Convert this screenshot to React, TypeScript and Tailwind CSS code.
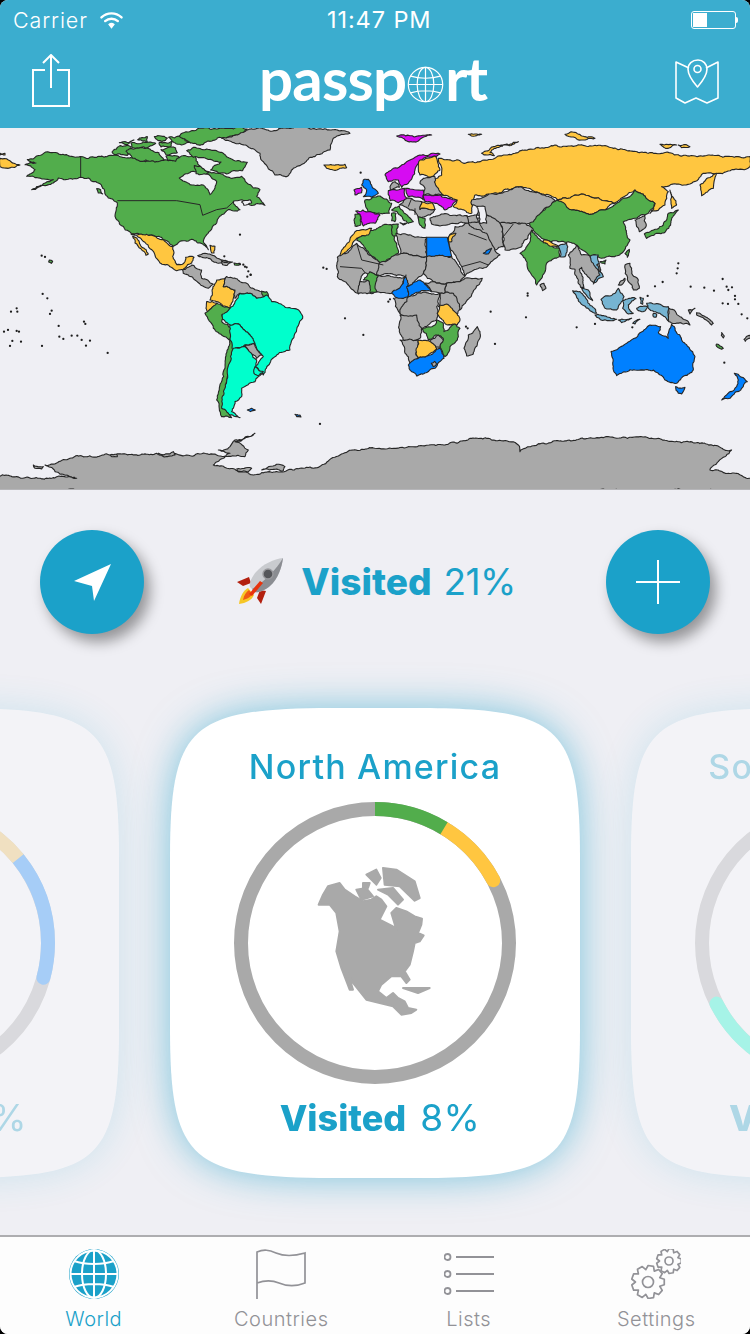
import type { ReactNode } from "react";

const GREEN = "#52ad4c";
const YELLOW = "#ffc640";
const MAGENTA = "#d60cf2";
const BLUE = "#0080ff";
const TEAL = "#00ffcc";
const GRAY = "#a9a9a9";
const SKY = "#76b4d2";
const BG = "#efeff4";

type Land = [string, string, boolean?];
type Region = { x: number; y: number; land: Land[]; borders?: string[]; dots?: string };

// every region is traced at 3x, x/y is the page px of its origin
const americasAndPoles: Region = {
  x: 0,
  y: 125,
  land: [
    [GRAY, "665,40 740,15 860,10 990,15 1050,25 1000,40 990,75 940,95 880,130 860,155 825,150 790,110 780,85 720,55"],
    [YELLOW, "972,120 1035,118 1040,128 1000,135 980,130"],
    [YELLOW, "0,100 25,105 60,120 25,130 0,125"],
    [YELLOW, "0,85 15,85 15,90 0,90"],
    [GRAY, "548,435 575,420 605,435 605,460 640,478 625,490 585,465 550,445"],
    [YELLOW, "650,465 680,455 670,485 705,495 700,520 690,550 650,530 630,525"],
    [YELLOW, "620,530 650,535 625,562 618,550"],
    [GRAY, "680,455 740,475 770,495 790,500 800,515 770,520 750,505 720,505 705,520 705,495 670,485"],
    [GREEN, "785,498 800,500 805,515 790,515"],
    [TEAL, "720,505 750,505 770,520 800,510 815,530 900,560 908,580 885,625 870,675 830,690 790,750 765,725 790,695 770,670 750,630 720,600 690,600 665,580 665,565 705,530"],
    [GREEN, "615,565 650,535 690,550 665,570 665,590 695,610 690,645 665,630 640,610"],
    [TEAL, "690,600 720,600 750,630 765,655 735,660 705,670 690,680 690,645"],
    [GRAY, "735,660 760,655 785,690 770,700 745,680"],
    [GREEN, "690,645 698,680 680,770 668,850 695,878 665,875 650,825 675,730"],
    [TEAL, "700,670 735,665 770,705 765,745 790,745 765,770 725,790 725,815 705,830 695,860 720,878 690,870 665,850 680,770"],
    [TEAL, "765,725 790,740 775,752 762,745"],
    [BLUE, "742,855 755,850 766,855 752,860"],
    [BLUE, "885,868 900,870 903,876 890,875"],
    // antarctica runs across the whole map
    [GRAY, "-6,1055 50,1055 100,1060 230,1060 165,1040 135,1020 210,1000 330,990 470,985 560,990 650,990 735,995 745,975 705,950 765,925 705,945 690,965 655,975 690,985 640,1020 760,1050 900,1030 940,1030 1020,990 1060,975 1125,970 1225,965 1335,960 1465,940 1555,960 1560,980 1625,955 1765,940 1975,940 2195,975 2155,1010 2130,1035 2256,1060 2256,1100 -6,1100"],
    [GRAY, "100,1020 130,1025 125,1032 105,1030"],
    [GRAY, "785,1035 830,1018 855,1025 850,1038"],
    [GRAY, "710,1032 755,1030 745,1040 715,1040"],
    [GRAY, "330,990 350,988 352,995 335,995"],
    [GRAY, "475,985 520,980 525,990 490,995"],
  ],
  dots: "128,507 142,520 33,560 50,550 52,560 155,557 150,567 176,603 252,590 256,597 12,620 24,615 50,618 57,620 37,648 63,650 30,663 126,663 178,635 190,642 215,632 232,632 245,645 270,647 258,662 323,684 960,897 970,428 980,432 752,450 742,455 735,425 720,418",
};

const northAmerica: Region = {
  x: 20,
  y: 128,
  land: [
    [GREEN, "22,95 50,84 95,74 140,80 182,86 230,88 290,82 320,90 385,98 410,95 445,98 470,92 500,85 525,85 535,110 575,135 640,150 665,145 700,180 720,185 710,205 735,232 700,232 665,215 640,220 660,245 625,245 605,260 590,285 560,320 550,340 565,365 550,350 520,335 480,340 460,355 430,335 400,322 335,318 300,290 285,265 292,225 265,210 235,165 205,150 182,148 115,150 100,165 35,185 75,165 100,155 55,150 20,145 45,125 15,110 48,105"],
    [BG, "478,150 520,130 555,135 575,150 590,160 585,180 570,200 555,175 510,170"],
    [BG, "665,222 690,215 695,225 672,232"],
    [GREEN, "500,68 520,58 560,63 600,73 652,98 682,103 668,128 640,128 620,138 572,126 590,110 603,102 560,92 520,88"],
    [GREEN, "276,72 300,53 332,56 347,70 322,82 285,80"],
    [GREEN, "298,44 342,36 322,50"],
    [GREEN, "333,45 407,46 382,60 335,57"],
    [GREEN, "318,70 380,60 417,74 432,97 360,100 338,90"],
    [GREEN, "403,26 442,30 427,40"],
    [GREEN, "353,35 382,26 382,42"],
    [GREEN, "418,43 457,40 452,57 423,57"],
    [GREEN, "423,65 467,60 472,74 438,80"],
    [GREEN, "438,85 477,86 467,100 443,97"],
    [GREEN, "446,28 482,26 512,44 468,47"],
    [GREEN, "488,15 570,3 682,3 642,22 592,30 540,52 508,42 478,25"],
    [GREEN, "523,113 552,123 567,134 528,137"],
    [GREEN, "230,182 242,185 248,198 235,195"],
    [YELLOW, "333,318 395,322 430,335 458,356 458,385 470,410 492,405 497,388 522,388 515,405 495,420 470,428 420,405 400,370 365,335 350,322"],
    [YELLOW, "338,325 350,330 385,378 378,382 345,345"],
    [GRAY, "533,383 555,376 590,390 625,402 600,405 570,392"],
    [GRAY, "605,398 638,402 622,412 608,410"],
    [YELLOW, "570,352 585,355 582,375 575,375"],
    [GREEN, "88,396 98,400 94,406 86,402"],
    [GREEN, "642,405 660,406 656,412 644,411"],
  ],
  borders: ["182,86 182,148", "292,218 470,218 540,230 548,262 590,245 620,240 640,222"],
  dots: "65,383 75,387 660,320 613,385 670,410 680,418 685,430 692,440",
};

const asiaNorth: Region = {
  x: 375,
  y: 125,
  land: [
    [YELLOW, "190,100 250,105 270,115 330,105 420,85 450,75 540,60 700,65 820,85 1000,90 1125,95 1125,125 1030,145 985,145 950,175 860,185 880,200 870,240 825,265 840,235 780,195 720,235 620,207 550,225 510,210 430,185 370,205 300,210 290,265 235,245 245,225 200,210 175,160 200,150"],
    [YELLOW, "1025,145 975,180 980,212 1015,190"],
    [YELLOW, "550,225 620,207 720,235 690,255 650,268 590,255"],
    [MAGENTA, "65,33 170,30 130,48 100,50"],
    [YELLOW, "320,85 355,65 430,50 375,65 345,82 358,92 335,90"],
    [YELLOW, "570,28 600,22 660,40 620,45"],
    [YELLOW, "280,28 320,28 300,33"],
    [YELLOW, "855,58 905,60 880,70"],
    [YELLOW, "910,60 945,65 920,68"],
    [YELLOW, "885,195 905,240 890,250"],
    [GREEN, "460,285 545,225 590,255 650,268 690,255 725,235 780,195 840,235 820,265 785,280 745,290 765,345 740,385 680,400 650,395 610,365 580,350 500,340 470,310"],
  ],
  dots: "",
};

const europeAfrica: Region = {
  x: 340,
  y: 150,
  land: [
    [GRAY, "395,150 480,130 540,110 610,135 645,152 580,215 555,222 480,222 440,195 410,195 430,170 395,165"],
    [GRAY, "480,220 555,220 580,240 545,290 495,300 490,260"],
    [GRAY, "385,218 440,195 480,220 490,290 465,300 440,270 400,255"],
    [GRAY, "380,197 410,195 415,215 385,218"],
    [BG, "410,170 435,170 440,220 420,220 418,195"],
    [MAGENTA, "135,75 160,55 200,35 240,15 300,12 250,25 225,60 205,100 185,112 175,90 145,95"],
    [YELLOW, "240,30 285,18 300,60 280,80 240,75 235,55"],
    [BLUE, "70,90 85,88 100,115 115,130 95,142 70,140 80,120 65,105"],
    [MAGENTA, "42,120 65,112 65,128 45,135"],
    [GRAY, "150,110 165,95 178,112 150,122"],
    [GRAY, "250,85 285,80 290,110 310,135 250,135 255,115 240,100"],
    [GRAY, "195,145 245,155 240,178 285,178 270,195 235,205 225,185 195,170 178,165"],
    [GREEN, "75,150 120,138 155,160 148,190 120,190 85,185"],
    [MAGENTA, "47,183 90,185 120,195 105,220 70,228 60,195"],
    [GREEN, "45,193 60,193 62,225 45,228"],
    [MAGENTA, "145,122 195,115 200,145 175,158 150,152"],
    [MAGENTA, "197,115 250,120 250,150 205,140"],
    [MAGENTA, "250,135 300,135 352,150 330,172 315,180 285,160 255,155"],
    [YELLOW, "245,155 275,158 285,178 240,178"],
    [GREEN, "155,180 178,168 190,185 220,215 205,220 180,195"],
    [GREEN, "155,190 168,190 165,215 155,212"],
    [GREEN, "180,218 200,220 190,225"],
    [GREEN, "235,200 255,205 255,235 240,225"],
    [GRAY, "270,205 300,195 380,197 385,220 300,228 275,222"],
    [GRAY, "325,262 345,230 385,220 440,250 460,290 480,315 445,345 375,378 365,350 330,295"],
    [BLUE, "430,310 455,295 445,312"],
    [GREEN, "50,270 90,240 155,225 175,310 120,338"],
    [YELLOW, "95,235 85,255 50,265 20,305 0,320 18,285 45,245"],
    [GREEN, "155,225 175,222 172,255 160,258"],
    [GRAY, "168,250 225,262 260,262 260,320 195,310 180,312"],
    [BLUE, "260,262 322,262 335,320 260,320", true],
    [YELLOW, "330,255 348,250 335,275 325,275"],
    [GRAY, "-8,322 20,310 50,280 120,338 130,345 110,375 75,368 60,395 55,430 25,405 -8,380"],
    [GRAY, "120,338 180,312 195,310 260,320 250,370 205,410 195,380 125,375 110,375"],
    [GRAY, "260,320 335,320 375,378 360,395 320,400 280,395 250,370"],
    [GRAY, "320,400 360,395 375,385 427,385 395,435 360,480 340,475 315,440"],
    [GRAY, "280,395 320,400 315,440 300,430 275,425 250,400"],
    [GRAY, "60,395 110,375 195,380 185,410 155,430 110,425 90,430 55,432"],
    [GREEN, "70,390 90,365 115,378 110,385 110,425 90,428 88,395"],
    [GRAY, "160,445 205,440 210,490 180,490"],
    [GRAY, "205,440 235,428 300,430 290,470 290,510 255,530 245,540 180,490"],
    [BLUE, "155,430 190,400 198,375 203,410 205,440 175,445"],
    [BLUE, "200,410 240,390 275,425 235,427 205,440"],
    [GRAY, "300,430 340,430 360,475 350,495 320,465 295,470"],
    [YELLOW, "300,465 320,462 360,510 352,525 315,520 292,490"],
    [GRAY, "180,495 230,495 245,535 240,565 190,570 178,545"],
    [GRAY, "180,570 235,570 228,615 235,625 210,640"],
    [GREEN, "245,535 285,525 290,510 310,520 312,545 345,522 360,535 355,560 330,590 315,620 300,592 310,565 290,555 265,570"],
    [GRAY, "270,570 295,555 310,570 300,592 280,590"],
    [YELLOW, "235,570 265,572 290,595 262,618 235,625 228,612"],
    [BLUE, "205,645 235,625 262,618 300,595 312,625 285,655 230,678 215,665"],
    [GRAY, "274,640 284,634 290,642 280,650"],
    [GRAY, "412,530 420,545 400,612 380,618 372,595 385,555"],
    [GREEN, "540,310 560,290 575,240 595,265 610,275 660,295 658,320 625,335 590,405 575,375 555,325"],
    [YELLOW, "610,270 655,288 650,290 610,278"],
    [GRAY, "600,405 612,400 618,415 608,422"],
  ],
  borders: [
    "365,350 420,335 445,345",
    "385,250 400,255 440,270",
    "50,280 65,330 130,345",
    "0,350 65,355 75,368",
    "415,215 430,240",
    "520,222 490,260",
    "225,195 225,175",
    "215,145 205,170",
  ],
  dots: "62,68 15,505 70,555 150,448 145,455 452,485 558,502 465,582 378,530 383,535 563,430 563,437",
};

const oceania: Region = {
  x: 540,
  y: 210,
  land: [
    [SKY, "55,110 80,100 75,140 60,140"],
    [GRAY, "85,135 110,105 125,135 150,138 178,165 185,195 160,218 140,195 125,172 118,178 132,232 122,232 105,178 90,175"],
    [SKY, "150,140 175,135 178,160 170,165 190,200 160,222 180,195 160,160"],
    [SKY, "98,242 120,245 170,310 150,302 110,262"],
    [SKY, "125,235 145,240 158,272"],
    [SKY, "165,315 230,328 220,332 170,322"],
    [SKY, "183,268 225,250 235,235 252,260 230,300 195,295"],
    [SKY, "248,272 288,266 265,285 280,310 265,312 248,295"],
    [SKY, "235,330 275,325 245,338"],
    [SKY, "278,340 300,328 285,342"],
    [SKY, "290,295 325,290 315,303 295,302"],
    [SKY, "300,262 310,265 308,283 302,280"],
    [SKY, "340,310 350,312 348,322 340,320"],
    [SKY, "320,280 345,282 385,290 387,335 360,310 325,295"],
    [GRAY, "387,295 420,320 450,345 420,338 387,335"],
    [GRAY, "445,300 465,295 450,312"],
    [GRAY, "470,308 520,340 515,345 470,315"],
    [GRAY, "255,165 270,160 275,190 295,210 298,235 280,240 265,215"],
    [GRAY, "235,225 255,205 245,225"],
    [GREEN, "313,72 330,65 370,45 385,10 415,0 400,18 392,45 378,62 345,72 320,85"],
    [GRAY, "285,30 315,15 318,50 298,65 290,50"],
    [GREEN, "255,130 268,118 262,142"],
    [GREEN, "180,155 198,150 195,162"],
    [BLUE, "213,425 260,400 300,368 330,345 362,350 355,368 385,385 395,342 425,390 465,440 460,480 410,520 375,510 355,490 340,480 285,480 230,497 220,470"],
    [BLUE, "407,530 435,532 425,552 415,550"],
    [BLUE, "583,490 622,515 605,535 570,565 545,570 570,545 590,530 595,510"],
    [GREEN, "530,402 550,415 545,418 528,405"],
    [GRAY, "545,368 553,378 550,384 544,376"],
    [GRAY, "612,388 630,376 632,384 616,394"],
  ],
  dots: "415,160 413,175 410,190 368,216 345,229 452,230 493,233 522,242 548,207 560,230 565,240 576,232 585,258 585,268 548,280 564,282 595,282 605,313 622,325 323,258 110,352 165,342 277,352 553,458",
};

const regions = [americasAndPoles, asiaNorth, northAmerica, europeAfrica, oceania];

function noise(x: number, y: number) {
  const s = Math.sin(x * 12.9898 + y * 78.233) * 43758.5453;
  return s - Math.floor(s) - 0.5;
}

// midpoint displacement so the traced edges read as coastline
function roughEdge(a: number[], b: number[], out: number[][]) {
  const dx = b[0] - a[0];
  const dy = b[1] - a[1];
  const len = Math.hypot(dx, dy);
  if (len < 7) {
    out.push(b);
    return;
  }
  const flip = a[0] < b[0] || (a[0] === b[0] && a[1] < b[1]) ? 1 : -1;
  const mx = (a[0] + b[0]) / 2;
  const my = (a[1] + b[1]) / 2;
  const amp = noise(mx, my) * Math.min(len * 0.3, 9);
  const mid = [mx + ((-dy * flip) / len) * amp, my + ((dx * flip) / len) * amp];
  roughEdge(a, mid, out);
  roughEdge(mid, b, out);
}

function parse(points: string) {
  return points.split(" ").map((p) => p.split(",").map(Number));
}

function rough(points: string, closed: boolean) {
  const pts = parse(points);
  const out: number[][] = [pts[0]];
  for (let i = 1; i < pts.length; i++) roughEdge(pts[i - 1], pts[i], out);
  if (closed) roughEdge(pts[pts.length - 1], pts[0], out);
  return out.map((p) => `${p[0].toFixed(1)},${p[1].toFixed(1)}`).join(" ");
}

function MapRegion({ region }: { region: Region }) {
  return (
    <g transform={`translate(${region.x} ${region.y}) scale(0.3333)`}>
      {region.land.map(([fill, points, straight], i) => (
        <polygon key={i} points={straight ? points : rough(points, true)} fill={fill} stroke="#262626" strokeWidth={3.3} strokeLinejoin="round" />
      ))}
      {region.borders?.map((points, i) => (
        <polyline key={i} points={points} fill="none" stroke="#262626" strokeWidth={3} />
      ))}
      {region.dots
        ? parse(region.dots).map(([cx, cy]) => <circle key={`${cx}-${cy}`} cx={cx} cy={cy} r={3.4} fill="#1c1c1c" />)
        : null}
    </g>
  );
}

function WorldMap() {
  return (
    <svg viewBox="0 128 750 361" className="block w-full h-full">
      {regions.map((r) => (
        <MapRegion key={`${r.x}-${r.y}`} region={r} />
      ))}
    </svg>
  );
}

function Globe({ size, color }: { size: number; color: string }) {
  return (
    <svg width={size} height={size} viewBox="0 0 40 40" fill="none" stroke={color} strokeWidth={1.3}>
      <circle cx="20" cy="20" r="18.6" />
      <ellipse cx="20" cy="20" rx="9" ry="18.6" />
      <path d="M20 1.400v37.200M1.400 20h37.200M4 11c9 3 23 3 32 0M4 29c9-3 23-3 32 0" />
    </svg>
  );
}

function Logo() {
  return (
    <div className="flex items-start h-[60px] font-['Lato',sans-serif] font-bold text-white text-[60px] leading-[60px]">
      <span className="tracking-[-0.8px]">passp</span>
      <span className="mt-[18px] mx-[1px]">
        <Globe size={37} color="#ffffff" />
      </span>
      <span className="tracking-[-2px]">rt</span>
    </div>
  );
}

function TabGlobe() {
  return (
    <svg width="50" height="50" viewBox="0 0 50 50" fill="none">
      <circle cx="25" cy="25" r="25" fill="#1ba1c9" />
      <g stroke="#ffffff" strokeWidth={2}>
        <ellipse cx="25" cy="25" rx="12" ry="24" />
        <path d="M25 1v48M1 25h48M5 12c11 4 29 4 40 0M5 38c11-4 29-4 40 0" />
        <circle cx="25" cy="25" r="23.500" />
      </g>
    </svg>
  );
}

function gearPath(cx: number, cy: number, r: number, teeth: number) {
  const pts: string[] = [];
  const step = (Math.PI * 2) / teeth;
  for (let i = 0; i < teeth; i++) {
    const a = i * step;
    const offsets: [number, number][] = [
      [-0.5, 0.76],
      [-0.24, 1],
      [0.24, 1],
      [0.5, 0.76],
    ];
    offsets.forEach(([o, k]) => {
      const t = a + o * step;
      pts.push(`${(cx + Math.cos(t) * r * k).toFixed(2)},${(cy + Math.sin(t) * r * k).toFixed(2)}`);
    });
  }
  return "M" + pts.join("L") + "Z";
}

function TabGears() {
  return (
    <svg width="50" height="50" viewBox="0 0 50 50" fill="none" stroke="#929297" strokeWidth={1.7} strokeLinejoin="round">
      <path d={gearPath(17, 33, 16.5, 9)} />
      <circle cx="17" cy="33" r="5.500" />
      <path d={gearPath(38, 12, 12.5, 9)} />
      <circle cx="38" cy="12" r="4" />
    </svg>
  );
}

function TabFlag() {
  return (
    <svg width="50" height="50" viewBox="0 0 50 50" fill="none" stroke="#929297" strokeWidth={1.7}>
      <path d="M1 50V3c7-3 12-2 19 1s15 4 29 0v30c-10 4-19 3-26 0s-14-3-22 0" />
    </svg>
  );
}

function TabList() {
  return (
    <svg width="50" height="50" viewBox="0 0 50 50" fill="none" stroke="#929297" strokeWidth={1.8}>
      <circle cx="3.500" cy="8" r="3" />
      <circle cx="3.500" cy="25" r="3" />
      <circle cx="3.500" cy="42" r="3" />
      <path d="M12 8h38M12 25h38M12 42h38" />
    </svg>
  );
}

function Tab({ label, active, children }: { label: string; active?: boolean; children: ReactNode }) {
  return (
    <div className="flex flex-col items-center">
      <div className="w-[50px] h-[50px]">{children}</div>
      <span className={`mt-[6px] text-[20px] leading-[28px] font-light tracking-[0.5px] font-['Inter',sans-serif] ${active ? "text-[#1ba1c9]" : "text-[#929297]"}`}>
        {label}
      </span>
    </div>
  );
}

function Rocket() {
  return (
    <svg width="48" height="48" viewBox="0 0 48 48">
      <path d="M13 19 1 24l6 4 8-3zM30 33l-5 13-4-6 3-8z" fill="#b3200f" />
      <path d="M47 0c-9 1-20 6-27 14-5 6-7 12-6 15l5 5c3 1 9-1 15-6C42 21 46 9 47 0z" fill="#c9cbcf" />
      <path d="M47 0c-1 9-5 21-13 28-6 5-12 7-15 6l-3-3C28 24 40 12 47 0z" fill="#8b8d92" />
      <circle cx="32" cy="16" r="5" fill="#55565a" stroke="#9a9a9e" strokeWidth={1.4} />
      <path d="M12 30c-4 2-8 8-9 16 7-1 13-4 15-9z" fill="#f6c626" />
      <path d="M13 32c-3 2-5 5-6 10 4-1 8-3 9-6z" fill="#ef5a12" />
      <path d="M13 36 24 23l3 2-11 13z" fill="#e8330d" />
    </svg>
  );
}

function ringDash(from: number, to: number) {
  const len = 2 * Math.PI * 134;
  return { strokeDasharray: `${((to - from) / 360) * len} ${len}`, strokeDashoffset: `${(-from / 360) * len}` };
}

type Arc = { color: string; from: number; to: number; round?: boolean };

function Ring({ arcs, children }: { arcs: Arc[]; children?: ReactNode }) {
  return (
    <div className="relative w-[284px] h-[284px]">
      <svg width="284" height="284" viewBox="0 0 284 284" fill="none" className="-rotate-90">
        <circle cx="142" cy="142" r="134" stroke={GRAY} strokeWidth={14} />
        {arcs.map((a) => (
          <circle
            key={a.color}
            cx="142"
            cy="142"
            r="134"
            stroke={a.color}
            strokeWidth={14}
            strokeLinecap={a.round ? "round" : "butt"}
            {...ringDash(a.from, a.to)}
          />
        ))}
      </svg>
      {children}
    </div>
  );
}

function NorthAmericaShape() {
  return (
    <svg width="130" height="160" viewBox="0 0 390 480" fill={GRAY} stroke={GRAY} strokeWidth={6} strokeLinejoin="round" className="absolute left-[75px] top-[57px]">
      <path d="M32 140 45 110 60 85 95 75 110 95 140 115 165 130 190 125 205 115 220 125 235 145 215 185 255 205 265 215 250 165 265 150 295 160 320 175 342 182 340 200 330 225 347 232 335 250 320 255 315 280 305 320 290 340 305 365 295 375 280 355 250 355 220 380 210 400 235 420 255 405 270 420 290 430 300 450 325 455 310 465 280 470 255 445 215 435 175 425 135 375 120 345 135 395 125 395 100 330 85 280 95 220 85 165 65 140Z" />
      <path d="M225 30 265 35 320 70 335 120 320 128 275 85 230 80Z" />
      <path d="M175 50 205 35 218 60 205 80Z" />
      <path d="M165 75 185 75 180 90 165 90Z" />
      <path d="M145 95 175 90 195 115 160 125Z" />
      <path d="M210 95 255 90 285 125 270 140 240 110Z" />
      <path d="M285 390 365 390 330 405Z" />
    </svg>
  );
}

function Card({ title, visited, arcs, faded, children }: { title: string; visited: string; arcs: Arc[]; faded?: boolean; children?: ReactNode }) {
  return (
    <div className={`shrink-0 drop-shadow-[0_0_19px_rgba(27,161,201,0.55)] ${faded ? "opacity-30" : ""}`}>
      <div className="w-[410px] h-[470px] bg-white flex flex-col items-center text-[#1ba1c9] font-['Inter',sans-serif] [clip-path:path('M0,150_C0,20_20,2_150,0_L260,0_C390,2_410,20_410,150_L410,320_C410,450_390,468_260,470_L150,470_C20,468_0,450_0,320_Z')]">
        <div className="mt-[38px] h-[42px] text-[34px] font-medium leading-[42px] tracking-[1.2px] whitespace-nowrap">{title}</div>
        <div className="mt-[13px]">
          <Ring arcs={arcs}>{children}</Ring>
        </div>
        <div className="flex items-baseline mt-[12px] ml-[10px] h-[42px] text-[36px] leading-[42px] whitespace-nowrap">
          <span className="font-extrabold">Visited</span>
          <span className="ml-[14px] text-[37px] tracking-[0.4px]">{visited}</span>
        </div>
      </div>
    </div>
  );
}

export default function App() {
  return (
    <div className="w-[750px] h-[1334px] bg-black overflow-hidden">
      <div className="flex flex-col h-full rounded-[8px] overflow-hidden bg-[#efeff4]">
        {/* HEADER */}
        <header className="h-[128px] shrink-0 bg-[#3badcf] text-white">
          <div className="flex items-center h-[40px] pl-[13px] pr-[12px] font-['Inter',sans-serif]">
            <div className="flex items-center gap-[11px] w-[314px]">
              <span className="text-[21.5px] font-light tracking-[0.9px]">Carrier</span>
              <svg width="25" height="18" viewBox="0 0 22 17" fill="none" stroke="#ffffff" strokeWidth={2.3} strokeLinecap="round">
                <path d="M1.500 6c5.500-5 13.500-5 19 0M5 9.500c3.500-3 8.500-3 12 0" />
                <path d="M8.500 12.700c1.500-1.200 3.500-1.200 5 0L11 16z" fill="#ffffff" strokeWidth={1} />
              </svg>
            </div>
            <span className="text-[23.5px] font-normal tracking-[0.9px]">11:47 PM</span>
            <div className="flex items-center ml-auto">
              <div className="w-[45px] h-[18px] border border-white rounded-[3px] p-[1px]">
                <div className="w-[14px] h-full bg-white" />
              </div>
              <div className="w-[2px] h-[6px] bg-white rounded-r-sm" />
            </div>
          </div>
          <div className="flex items-start justify-between h-[88px] pl-[32px] pr-[31px]">
            <svg width="38" height="54" viewBox="0 0 38 54" fill="none" stroke="#ffffff" strokeWidth={2} className="mt-[14px]">
              <path d="M13 16H1v36h36V16H25M19 34V2M11 9l8-8 8 8" />
            </svg>
            <div className="mt-[8px]">
              <Logo />
            </div>
            <svg width="44" height="46" viewBox="0 0 44 46" fill="none" stroke="#ffffff" strokeWidth={1.6} strokeLinejoin="round" className="mt-[19px]">
              <path d="M14 9 1 3v36l9 5 11-5 11 5 11-5V3l-12 6" />
              <path d="M23 1c-6 0-10 4-10 9 0 6 6 14 9.500 18 3.500-4 9.500-12 9.500-18 0-5-4-9-9-9z" />
              <circle cx="22.500" cy="10" r="3.500" />
            </svg>
          </div>
        </header>

        {/* MAP */}
        <section className="h-[362px] shrink-0 border-b border-[#b5b5b8]">
          <WorldMap />
        </section>

        {/* ACTIONS */}
        <div className="relative z-10 flex items-center justify-between shrink-0 h-[104px] mt-[40px] px-[40px]">
          <button className="flex items-center justify-center w-[104px] h-[104px] rounded-full bg-[#1ba1c9] shadow-[6px_8px_14px_rgba(0,0,0,0.38)]">
            <svg width="37" height="37" viewBox="0 0 37 37" fill="#ffffff">
              <path d="M37 0 20 37 18 22 0 17z" />
            </svg>
          </button>
          <div className="flex items-center ml-[2px] text-[#1ba1c9] font-['Inter',sans-serif] text-[37px] leading-[44px]">
            <Rocket />
            <span className="ml-[17px] font-extrabold">Visited</span>
            <span className="ml-[12px] tracking-[-0.6px]">21%</span>
          </div>
          <button className="flex items-center justify-center w-[104px] h-[104px] rounded-full bg-[#1ba1c9] shadow-[6px_8px_14px_rgba(0,0,0,0.38)]">
            <svg width="44" height="44" viewBox="0 0 44 44" stroke="#ffffff" strokeWidth={2}>
              <path d="M22 0v44M0 22h44" />
            </svg>
          </button>
        </div>

        {/* CARDS */}
        <div className="flex-1 min-h-0 flex justify-center gap-[51px] pt-[74px]">
          <Card title="Africa" visited="21%" faded arcs={[{ color: "#0080ff", from: 51, to: 105, round: true }, { color: "#f5c04f", from: 0, to: 51 }]} />
          <Card title="North America" visited="8%" arcs={[{ color: YELLOW, from: 31, to: 62, round: true }, { color: GREEN, from: 0, to: 31 }]}>
            <NorthAmericaShape />
          </Card>
          <Card title="South America" visited="38%" faded arcs={[{ color: TEAL, from: 0, to: 243, round: true }]} />
        </div>

        {/* TAB BAR */}
        <nav className="relative z-20 shrink-0 grid grid-cols-4 h-[99px] pt-[12px] bg-[#fdfdfd] border-t-2 border-[#adadb0]">
          <Tab label="World" active>
            <TabGlobe />
          </Tab>
          <Tab label="Countries">
            <TabFlag />
          </Tab>
          <Tab label="Lists">
            <TabList />
          </Tab>
          <Tab label="Settings">
            <TabGears />
          </Tab>
        </nav>
      </div>
    </div>
  );
}
